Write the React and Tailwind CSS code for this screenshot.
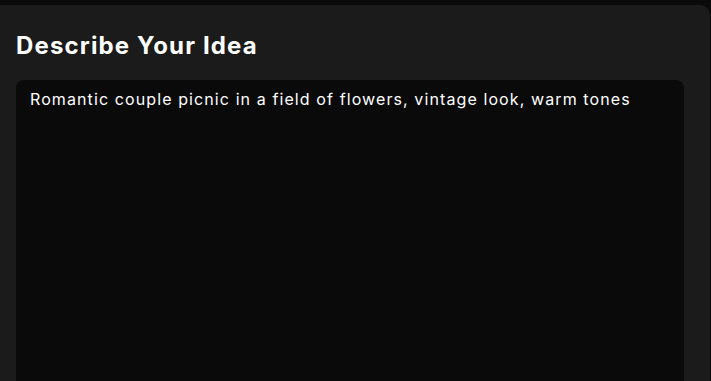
import React from "react";

export default function App() {
  return (
    <div
      className="h-[381px] w-full overflow-hidden bg-[#0a0a0a] pt-[5px]"
      style={{ fontFamily: "Inter, 'Noto Sans', sans-serif" }}
    >
      <div className="flex h-[420px] w-[710px] flex-col rounded-tr-[10px] bg-[#1b1b1b] pl-4 pt-[25px]">
        <h1 className="text-[24px] font-bold leading-8 tracking-[1.15px] text-white">
          Describe Your Idea
        </h1>
        <textarea
          readOnly
          defaultValue="Romantic couple picnic in a field of flowers, vintage look, warm tones"
          className="mt-[18px] w-[668px] flex-1 resize-none rounded-lg bg-[#0a0a0a] pl-[14px] pr-3 pt-[7px] text-[16px] font-normal leading-6 tracking-[1.1px] text-white outline-none"
        />
      </div>
    </div>
  );
}
